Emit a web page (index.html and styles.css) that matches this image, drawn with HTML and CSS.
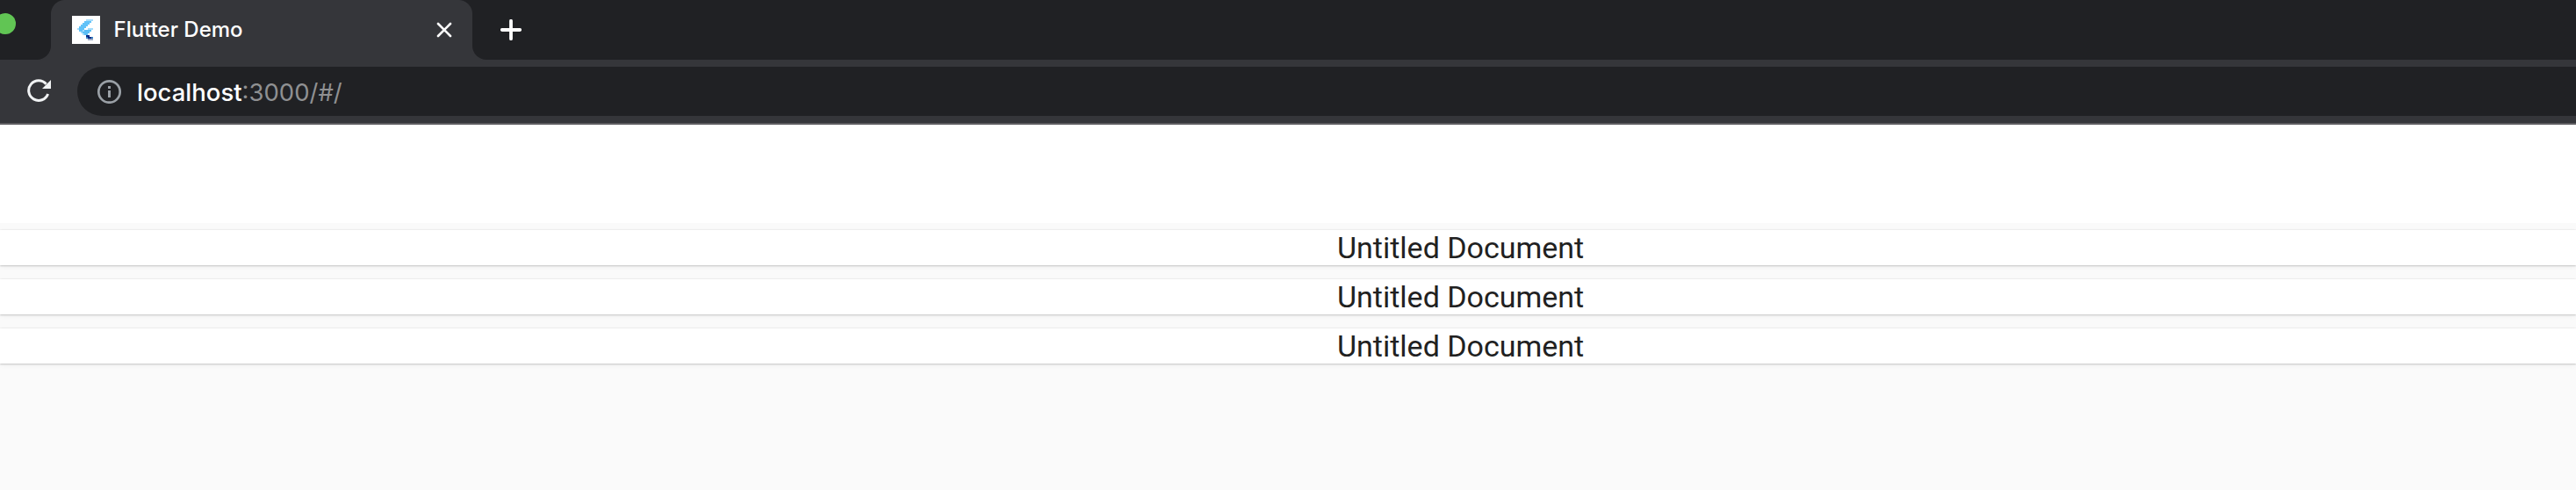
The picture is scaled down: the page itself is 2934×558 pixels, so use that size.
FILE: index.html
```
<!DOCTYPE html>
<html lang="en">
<head>
<meta charset="utf-8">
<title>Flutter Demo</title>
<link rel="stylesheet" href="styles.css">
</head>
<body>
<header class="browser">
  <div class="tabstrip">
    <div class="window-controls"><span class="maximize"></span></div>
    <div class="tab">
      <svg class="favicon" viewBox="0 0 16 16" shape-rendering="crispEdges">
        <rect width="16" height="16" fill="#fff"/>
        <path d="M9 2h3v1h-1v1h-1v1h-1v1h-1v1h-1v1h-1v1h-2v-1h-1v-1h1v-1h1v-1h1v-1h1v-1h1v-1h1z" fill="#61c2f8"/>
        <path d="M9 2h3v1H8v-1zM3 7h1v1h-1zM5 9h1v-1h1v1h-1v1h-1z" fill="#a5dcfb"/>
        <path d="M9 7h3v1h-1v1h-1v1h-1v1h1v1h-2v-1h-1v-1h-1v-1h1v-1h2z" fill="#5bbef5"/>
        <path d="M9 7h3v1h-3zM6 10h1v1h-1z" fill="#a5dcfb"/>
        <path d="M8 11h2v1h1v1h-2v-1h-1z" fill="#082a86"/>
        <path d="M9 13h3v1h-3z" fill="#9ba9c5"/>
        <path d="M8 12h1v1h-1zM11 12h1v1h-1z" fill="#3b83c4"/>
      </svg>
      <span class="tab-title">Flutter Demo</span>
      <svg class="close" viewBox="0 0 16 16"><path d="M1 1l14 14M15 1L1 15"/></svg>
    </div>
    <div class="strip-rest">
      <svg class="new-tab" viewBox="0 0 24 24"><path d="M12 1.8v20.4M1.8 12h20.4"/></svg>
    </div>
  </div>
  <div class="toolbar">
    <svg class="reload" viewBox="0 0 28 28"><path d="M21.6 5.8A11.3 11.3 0 1 0 23.6 17" fill="none" stroke="#f1f3f4" stroke-width="3"/><path d="M27 1v10H17z" fill="#f1f3f4"/></svg>
    <div class="omnibox">
      <svg class="info" viewBox="0 0 28 28"><circle cx="14.5" cy="14.5" r="12.2" fill="none" stroke="#9aa0a6" stroke-width="2.7"/><path d="M13 8h3v3h-3zM13 13h3v8h-3z" fill="#9aa0a6"/></svg>
      <span class="url"><span class="host">localhost</span><span class="path">:3000/#/</span></span>
    </div>
  </div>
</header>
<main class="page">
  <div class="page-head"></div>
  <div class="documents">
    <div class="card">Untitled Document</div>
    <div class="card">Untitled Document</div>
    <div class="card">Untitled Document</div>
  </div>
</main>
</body>
</html>
```
FILE: styles.css
```
* { box-sizing: border-box; }
body { margin: 0; height: 558px; overflow: hidden; background: #fafafa; }
svg { display: block; flex: none; }
.browser { height: 142px; background: #35363a; border-bottom: 2px solid #5d5c60; font-family: Inter, "Liberation Sans", sans-serif; }
.tabstrip { height: 68px; display: flex; background: #35363a; }
.window-controls { width: 58px; background: #202124; border-bottom-right-radius: 16px; overflow: hidden; }
.maximize { display: block; width: 24px; height: 24px; margin: 15px 0 0 -6px; border-radius: 50%; background: #61c554; }
.tab { width: 480px; display: flex; align-items: flex-start; padding: 18px 24px 0; background: radial-gradient(circle at 16px 16px, #35363a 15.5px, #202124 16.5px) 0 0 / 16px 16px no-repeat, radial-gradient(circle at 0 16px, #35363a 15.5px, #202124 16.5px) 100% 0 / 16px 16px no-repeat, #35363a; }
.favicon { width: 32px; height: 32px; }
.tab-title { margin-left: 15.5px; line-height: 32px; font-size: 24px; font-weight: 500; color: #fff; white-space: nowrap; }
.close { width: 16px; height: 16px; margin: 8px 0 0 auto; fill: none; stroke: #fff; stroke-width: 2.6; stroke-linecap: round; overflow: visible; }
.strip-rest { flex: 1; padding: 22px 0 0 32px; border-bottom-left-radius: 16px; background: #202124; }
.new-tab { width: 24px; height: 24px; fill: none; stroke: #fff; stroke-width: 3.8; stroke-linecap: round; }
.toolbar { height: 72px; display: flex; align-items: center; padding-left: 31px; }
.reload { width: 28px; height: 28px; }
.omnibox { flex: 1; height: 56px; margin-left: 29px; padding-left: 22px; display: flex; align-items: center; border-radius: 28px 0 0 28px; background: #202124; }
.info { width: 28px; height: 28px; }
.url { margin-left: 18px; padding-top: 1px; font-size: 27.5px; line-height: 56px; white-space: nowrap; }
.host { color: #fff; font-weight: 500; }
.path { color: #8f9092; }
.page-head { height: 112px; background: #fff; }
.documents { display: flex; flex-direction: column; gap: 16px; padding-top: 8px; }
.card { height: 40px; padding-left: 1523px; background: #fff; color: #212121; font: 400 34px/40px Roboto, sans-serif; white-space: nowrap; box-shadow: 0 1px 2px rgba(0,0,0,.16), 0 0 2px rgba(0,0,0,.1), 0 2px 6px rgba(0,0,0,.04); }
```
